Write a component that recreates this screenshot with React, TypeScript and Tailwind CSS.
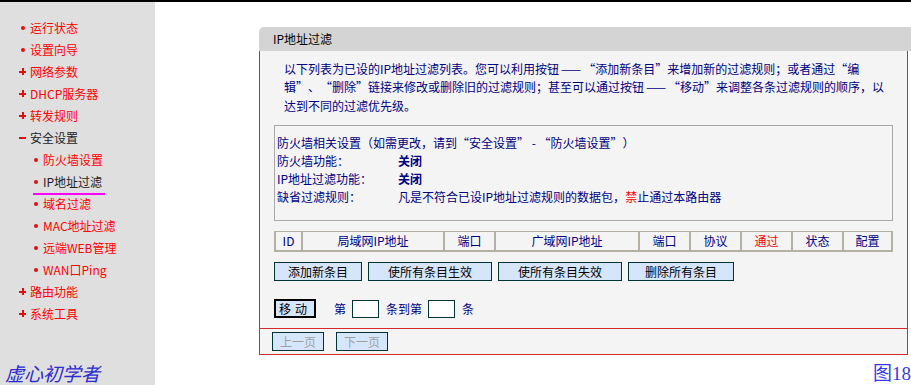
import React from "react";

type MenuItem = {
  label: string;
  mark: "dot" | "plus" | "minus";
  level: 1 | 2;
  active?: boolean;
  dark?: boolean;
};

const MENU: MenuItem[] = [
  { label: "运行状态", mark: "dot", level: 1 },
  { label: "设置向导", mark: "dot", level: 1 },
  { label: "网络参数", mark: "plus", level: 1 },
  { label: "DHCP服务器", mark: "plus", level: 1 },
  { label: "转发规则", mark: "plus", level: 1 },
  { label: "安全设置", mark: "minus", level: 1, dark: true },
  { label: "防火墙设置", mark: "dot", level: 2 },
  { label: "IP地址过滤", mark: "dot", level: 2, active: true, dark: true },
  { label: "域名过滤", mark: "dot", level: 2 },
  { label: "MAC地址过滤", mark: "dot", level: 2 },
  { label: "远端WEB管理", mark: "dot", level: 2 },
  { label: "WAN口Ping", mark: "dot", level: 2 },
  { label: "路由功能", mark: "plus", level: 1 },
  { label: "系统工具", mark: "plus", level: 1 },
];

const COLUMNS: Array<{ label: string; width: string; red?: boolean }> = [
  { label: "ID", width: "w-[27px]" },
  { label: "局域网IP地址", width: "w-[142px]" },
  { label: "端口", width: "w-[51px]" },
  { label: "广域网IP地址", width: "w-[144px]" },
  { label: "端口", width: "w-[51px]" },
  { label: "协议", width: "w-[51px]" },
  { label: "通过", width: "w-[51px]", red: true },
  { label: "状态", width: "w-[51px]" },
  { label: "配置", width: "w-[51px]" },
];

// full-width punctuation, the way the router page's bitmap font sets it
const Lq = () => <span className="inline-block w-[12px] text-right">“</span>;
const Rq = () => <span className="inline-block w-[12px] text-left">”</span>;
const Dash = () => <span className="inline-block w-[24px] text-center">——</span>;

function Mark({ mark }: { mark: MenuItem["mark"] }) {
  if (mark === "dot") {
    return <span className="block h-[4px] w-[4px] rounded-full bg-[#e01010]" />;
  }
  return (
    <span className="relative block h-[7px] w-[7px]">
      <span className="absolute left-0 top-[2.5px] h-[2px] w-[7px] bg-[#e01010]" />
      {mark === "plus" ? <span className="absolute left-[2.5px] top-0 h-[7px] w-[2px] bg-[#e01010]" /> : null}
    </span>
  );
}

function Sidebar() {
  return (
    <div className="flex h-[383px] w-[155px] shrink-0 flex-col bg-[#dfdfdf] pt-[15px]">
      {MENU.map((item) => (
        <div
          key={item.label}
          className={`flex h-[22px] items-center ${item.level === 1 ? "pl-[19px]" : "pl-[32px]"}`}
        >
          <span className="mr-[4px] flex w-[7px] justify-center">
            <Mark mark={item.mark} />
          </span>
          <span
            className={`relative whitespace-nowrap text-[12px] leading-[22px] ${
              item.dark ? "text-[#222]" : "text-[#ff0000]"
            }`}
          >
            {item.label}
            {item.active ? (
              <span className="absolute bottom-[-2px] left-[-10px] h-[2px] w-[72px] bg-[#ff00ff]" />
            ) : null}
          </span>
        </div>
      ))}
      <div className="mt-auto pb-[1px] pl-[5px] text-[19px] italic leading-[22px] text-[#2b2bd0]">
        虚心初学者
      </div>
    </div>
  );
}

function BlueButton({ label, width, muted }: { label: string; width: string; muted?: boolean }) {
  return (
    <button
      type="button"
      className={`flex h-[19px] ${width} items-center justify-center border border-[#003333] bg-[#d6e6fa] text-[12px] leading-none ${
        muted ? "text-[#a0a0a0]" : "text-black"
      }`}
    >
      {label}
    </button>
  );
}

export default function App() {
  return (
    <div className="flex h-[385px] w-[911px] flex-col overflow-hidden bg-white font-['Noto_Sans_CJK_SC',sans-serif]">
      <div className="h-[2px] bg-black" />
      <div className="flex">
        <Sidebar />
        <div className="flex-1 pl-[104px] pt-[25px]">
          <div className="flex h-[24px] w-[652px] items-center rounded-tl-[5px] bg-[#d4d4d4] pl-[14px] text-[12px] text-black">
            IP地址过滤
          </div>
          <div className="w-[649px] border-x border-b border-[#d42a2a] bg-[#f4f4f4]">
            <div className="border-b border-[#d42a2a] pb-[10px] pl-[14px] pr-[14px] pt-[9px]">
              <p className="whitespace-nowrap pl-[10px] text-[12px] leading-[18.5px] text-[#000080]">
                以下列表为已设的IP地址过滤列表。您可以利用按钮<Dash />
                <Lq />添加新条目<Rq />来增加新的过滤规则；或者通过<Lq />编
                <br />
                辑<Rq />、<Lq />删除<Rq />链接来修改或删除旧的过滤规则；甚至可以通过按钮<Dash />
                <Lq />移动<Rq />来调整各条过滤规则的顺序，以
                <br />
                达到不同的过滤优先级。
              </p>

              <div className="mt-[10px] h-[96px] border border-[#a8a8a8] pl-[2px] pt-[8px] text-[12px] leading-[18px] text-[#000080]">
                <div className="whitespace-nowrap">
                  防火墙相关设置（如需更改，请到<Lq />安全设置<Rq /> - <Lq />防火墙设置<Rq />）
                </div>
                <div className="flex">
                  <span className="w-[121px]">防火墙功能：</span>
                  <span className="font-bold">关闭</span>
                </div>
                <div className="flex">
                  <span className="w-[121px]">IP地址过滤功能：</span>
                  <span className="font-bold">关闭</span>
                </div>
                <div className="flex whitespace-nowrap">
                  <span className="w-[121px]">缺省过滤规则：</span>
                  <span>
                    凡是不符合已设IP地址过滤规则的数据包，<span className="text-[#ff0000]">禁</span>止通过本路由器
                  </span>
                </div>
              </div>

              <div className="mt-[10px] flex h-[21px] w-[619px] border-b-2 border-r-2 border-t border-[#b4b1a4]">
                {COLUMNS.map((col, i) => (
                  <div
                    key={i}
                    className={`flex ${col.width} items-center justify-center border-l-2 border-[#b4b1a4] text-[12px] ${
                      col.red ? "text-[#ff0000]" : "text-[#000080]"
                    } ${i === COLUMNS.length - 1 ? "flex-1" : "shrink-0"}`}
                  >
                    {col.label}
                  </div>
                ))}
              </div>

              <div className="mt-[10px] flex gap-[6px]">
                <BlueButton label="添加新条目" width="w-[88px]" />
                <BlueButton label="使所有条目生效" width="w-[124px]" />
                <BlueButton label="使所有条目失效" width="w-[124px]" />
                <BlueButton label="删除所有条目" width="w-[106px]" />
              </div>

              <div className="mt-[18px] flex h-[19px] items-center text-[12px] text-[#000080]">
                <button
                  type="button"
                  className="flex h-[19px] w-[42px] items-center justify-center border-2 border-black bg-[#d6e6fa] text-[12px] tracking-[4px] text-black"
                >
                  移动
                </button>
                <span className="ml-[18px]">第</span>
                <span className="ml-[6px] h-[18px] w-[27px] border border-[#003333] bg-white" />
                <span className="ml-[7px]">条到第</span>
                <span className="ml-[6px] h-[18px] w-[27px] border border-[#003333] bg-white" />
                <span className="ml-[7px]">条</span>
              </div>
            </div>

            <div className="flex h-[25px] items-center gap-[12px] pl-[12px]">
              <BlueButton label="上一页" width="w-[52px]" muted />
              <BlueButton label="下一页" width="w-[52px]" muted />
            </div>
          </div>
          <div className="mt-[8px] flex justify-end text-[19px] leading-[22px] text-[#3838e8] font-['Liberation_Serif','Noto_Sans_CJK_SC',serif]">
            图18
          </div>
        </div>
      </div>
    </div>
  );
}
